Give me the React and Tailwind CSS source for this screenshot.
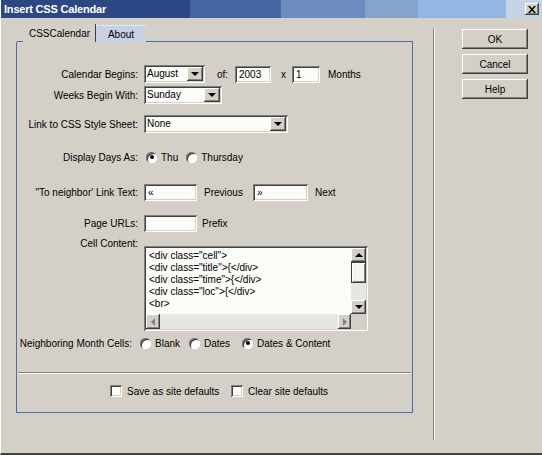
const sunken =
  "bg-[#fbfbf8] shadow-[inset_1px_1px_0_#808080,inset_-1px_-1px_0_#ffffff,inset_2px_2px_0_#404040,inset_-2px_-2px_0_#d4d0c8]";
const raised =
  "bg-[#d4d0c8] shadow-[inset_-1px_-1px_0_#404040,inset_1px_1px_0_#ffffff,inset_-2px_-2px_0_#808080,inset_2px_2px_0_#d4d0c8]";

function DownArrow({ muted }) {
  return (
    <span
      className={
        muted
          ? "h-0 w-0 border-x-[4px] border-t-[4px] border-x-transparent border-t-[#808080]"
          : "h-0 w-0 border-x-[4px] border-t-[4px] border-x-transparent border-t-black"
      }
    />
  );
}

function Select({ value, className }) {
  return (
    <div className={`flex h-[18px] items-stretch p-[2px] ${sunken} ${className}`}>
      <span className="flex-1 truncate pl-[1px] leading-[14px]">{value}</span>
      <span className={`flex w-[16px] items-center justify-center ${raised}`}>
        <DownArrow />
      </span>
    </div>
  );
}

function Input({ value, className }) {
  return (
    <div className={`h-[17px] px-[4px] leading-[17px] ${sunken} ${className}`}>
      {value}
    </div>
  );
}

function Radio({ checked }) {
  return (
    <span className="flex h-[11px] w-[11px] items-center justify-center rounded-full bg-white shadow-[inset_1px_1px_0_#808080,inset_-1px_-1px_0_#ffffff,inset_2px_2px_0_#404040]">
      {checked && <span className="h-[4px] w-[4px] rounded-full bg-black" />}
    </span>
  );
}

function Checkbox() {
  return <span className={`h-[12px] w-[12px] ${sunken}`} />;
}

function Row({ label, className, children }) {
  return (
    <div className={`flex items-center ${className}`}>
      <span className="w-[121px] shrink-0 text-right">{label}</span>
      <div className="ml-[6px] flex items-center">{children}</div>
    </div>
  );
}

function Button({ children }) {
  return (
    <div className={`flex h-[20px] items-center justify-center ${raised}`}>
      {children}
    </div>
  );
}

function TextArea() {
  return (
    <div className={`ml-[6px] mt-[8px] flex h-[85px] w-[224px] flex-col p-[2px] ${sunken}`}>
      <div className="flex flex-1">
        <div className="flex-1 pl-[3px] pt-[2px] leading-[12px]">
          <div>{'<div class="cell">'}</div>
          <div>{'<div class="title">{</div>'}</div>
          <div>{'<div class="time">{</div>'}</div>
          <div>{'<div class="loc">{</div>'}</div>
          <div>{"<br>"}</div>
        </div>
        <div className="flex w-[15px] flex-col bg-[#e6e6e2]">
          <span className={`flex h-[14px] items-center justify-center ${raised}`}>
            <span className="h-0 w-0 border-x-[4px] border-b-[4px] border-x-transparent border-b-black" />
          </span>
          <span className="h-[21px] border border-[#404040] bg-[#f4f4f0] shadow-[inset_1px_1px_0_#ffffff,inset_-1px_-1px_0_#808080]" />
          <span className="flex-1" />
          <span className={`flex h-[14px] items-center justify-center ${raised}`}>
            <DownArrow />
          </span>
        </div>
      </div>
      <div className="flex h-[15px]">
        <div className="flex flex-1 bg-[#e6e6e2]">
          <span className={`flex w-[14px] items-center justify-center ${raised}`}>
            <span className="h-0 w-0 border-y-[4px] border-r-[4px] border-y-transparent border-r-[#808080]" />
          </span>
          <span className="flex-1" />
          <span className={`flex w-[13px] items-center justify-center ${raised}`}>
            <span className="h-0 w-0 border-y-[4px] border-l-[4px] border-y-transparent border-l-[#808080]" />
          </span>
        </div>
        <div className="w-[15px] bg-[#d4d0c8]" />
      </div>
    </div>
  );
}

export default function App() {
  return (
    <div className="flex h-[455px] w-[542px] flex-col overflow-hidden border-b-2 border-l border-b-[#404040] border-l-white bg-[#d4d0c8] font-['Liberation_Sans',Arial,sans-serif] text-[10px] text-black">
      {/* title bar */}
      <div className="flex h-[18px] shrink-0 items-center justify-between bg-[linear-gradient(to_right,#2d4784_0%,#2d4784_35%,#4666a2_35%,#4666a2_51.7%,#6c8cc0_51.7%,#6c8cc0_67.3%,#84a4cc_67.3%,#84a4cc_77.1%,#94b6e2_77.1%,#94b6e2_93.4%,#c4d4e6_93.4%)] pl-[3px] pr-[3px]">
        <span className="text-[11px] font-bold tracking-[-0.2px] text-white">
          Insert CSS Calendar
        </span>
        <span className={`flex h-[12px] w-[14px] items-center justify-center text-[11px] leading-none ${raised}`}>
          <svg width="8" height="7" viewBox="0 0 8 7">
            <path d="M0 0h2l2 2.5L6 0h2L5 3.5 8 7H6L4 4.5 2 7H0l3-3.5z" fill="black" />
          </svg>
        </span>
      </div>

      <div className="flex flex-1">
        {/* left: tabs + panel */}
        <div className="w-[412px] shrink-0 pl-[15px] pt-[6px]">
          <div className="flex h-[18px] items-end">
            <div className="flex h-[18px] w-[80px] items-center justify-center border-r border-r-[#404040] pl-[8px]">
              CSSCalendar
            </div>
            <div className="flex h-[17px] w-[50px] items-center justify-center border-t border-dotted border-t-white bg-[#c6d2e4]">
              About
            </div>
            <div className="flex-1 border-b border-b-[#4c6cac]" />
          </div>
          <div className="relative flex h-[371px] flex-col border-x border-b border-[#4c6cac]">
            <div className="absolute -top-px left-0 h-px w-[6px] bg-[#4c6cac]" />
            <Row label="Calendar Begins:" className="mt-[23px] h-[18px]">
              <Select value="August" className="w-[61px]" />
              <span className="ml-[12px] w-[18px]">of:</span>
              <Input value="2003" className="w-[36px]" />
              <span className="ml-[10px] w-[11px]">x</span>
              <Input value="1" className="w-[28px]" />
              <span className="ml-[8px]">Months</span>
            </Row>
            <Row label="Weeks Begin With:" className="mt-[3px] h-[18px]">
              <Select value="Sunday" className="w-[78px]" />
            </Row>
            <Row label="Link to CSS Style Sheet:" className="mt-[11px] h-[18px]">
              <Select value="None" className="w-[144px]" />
            </Row>
            <Row label="Display Days As:" className="mt-[15px] h-[18px]">
              <span className="ml-[2px]">
                <Radio checked />
              </span>
              <span className="ml-[4px]">Thu</span>
              <span className="ml-[8px]">
                <Radio />
              </span>
              <span className="ml-[4px]">Thursday</span>
            </Row>
            <Row label={"\"To neighbor' Link Text:"} className="mt-[17px] h-[18px]">
              <Input value="«" className="w-[53px]" />
              <span className="ml-[7px] w-[49px]">Previous</span>
              <Input value="»" className="w-[55px]" />
              <span className="ml-[7px]">Next</span>
            </Row>
            <Row label="Page URLs:" className="mt-[14px] h-[17px]">
              <Input value="" className="w-[53px]" />
              <span className="ml-[5px]">Prefix</span>
            </Row>
            <div className="mt-[6px] flex items-start">
              <span className="w-[121px] shrink-0 text-right leading-[12px]">Cell Content:</span>
              <TextArea />
            </div>
            <div className="mt-[3px] flex h-[18px] items-center">
              <span className="w-[115px] shrink-0 text-right">Neighboring Month Cells:</span>
              <span className="ml-[8px]">
                <Radio />
              </span>
              <span className="ml-[4px] w-[34px]">Blank</span>
              <Radio />
              <span className="ml-[4px] w-[38px]">Dates</span>
              <Radio checked />
              <span className="ml-[4px]">Dates &amp; Content</span>
            </div>
            <div className="mx-[1px] mt-[20px] border-t border-b border-t-[#808080] border-b-white" />
            <div className="mt-[11px] flex h-[12px] items-center pl-[93px]">
              <Checkbox />
              <span className="ml-[5px] w-[104px]">Save as site defaults</span>
              <Checkbox />
              <span className="ml-[5px]">Clear site defaults</span>
            </div>
          </div>
        </div>

        {/* separator */}
        <div className="ml-[20px] mt-[10px] h-[412px] w-[2px] border-l border-r border-l-[#808080] border-r-white" />

        {/* buttons */}
        <div className="ml-[27px] mt-[11px] flex w-[66px] flex-col gap-[5px]">
          <Button>OK</Button>
          <Button>Cancel</Button>
          <Button>Help</Button>
        </div>
      </div>
    </div>
  );
}
